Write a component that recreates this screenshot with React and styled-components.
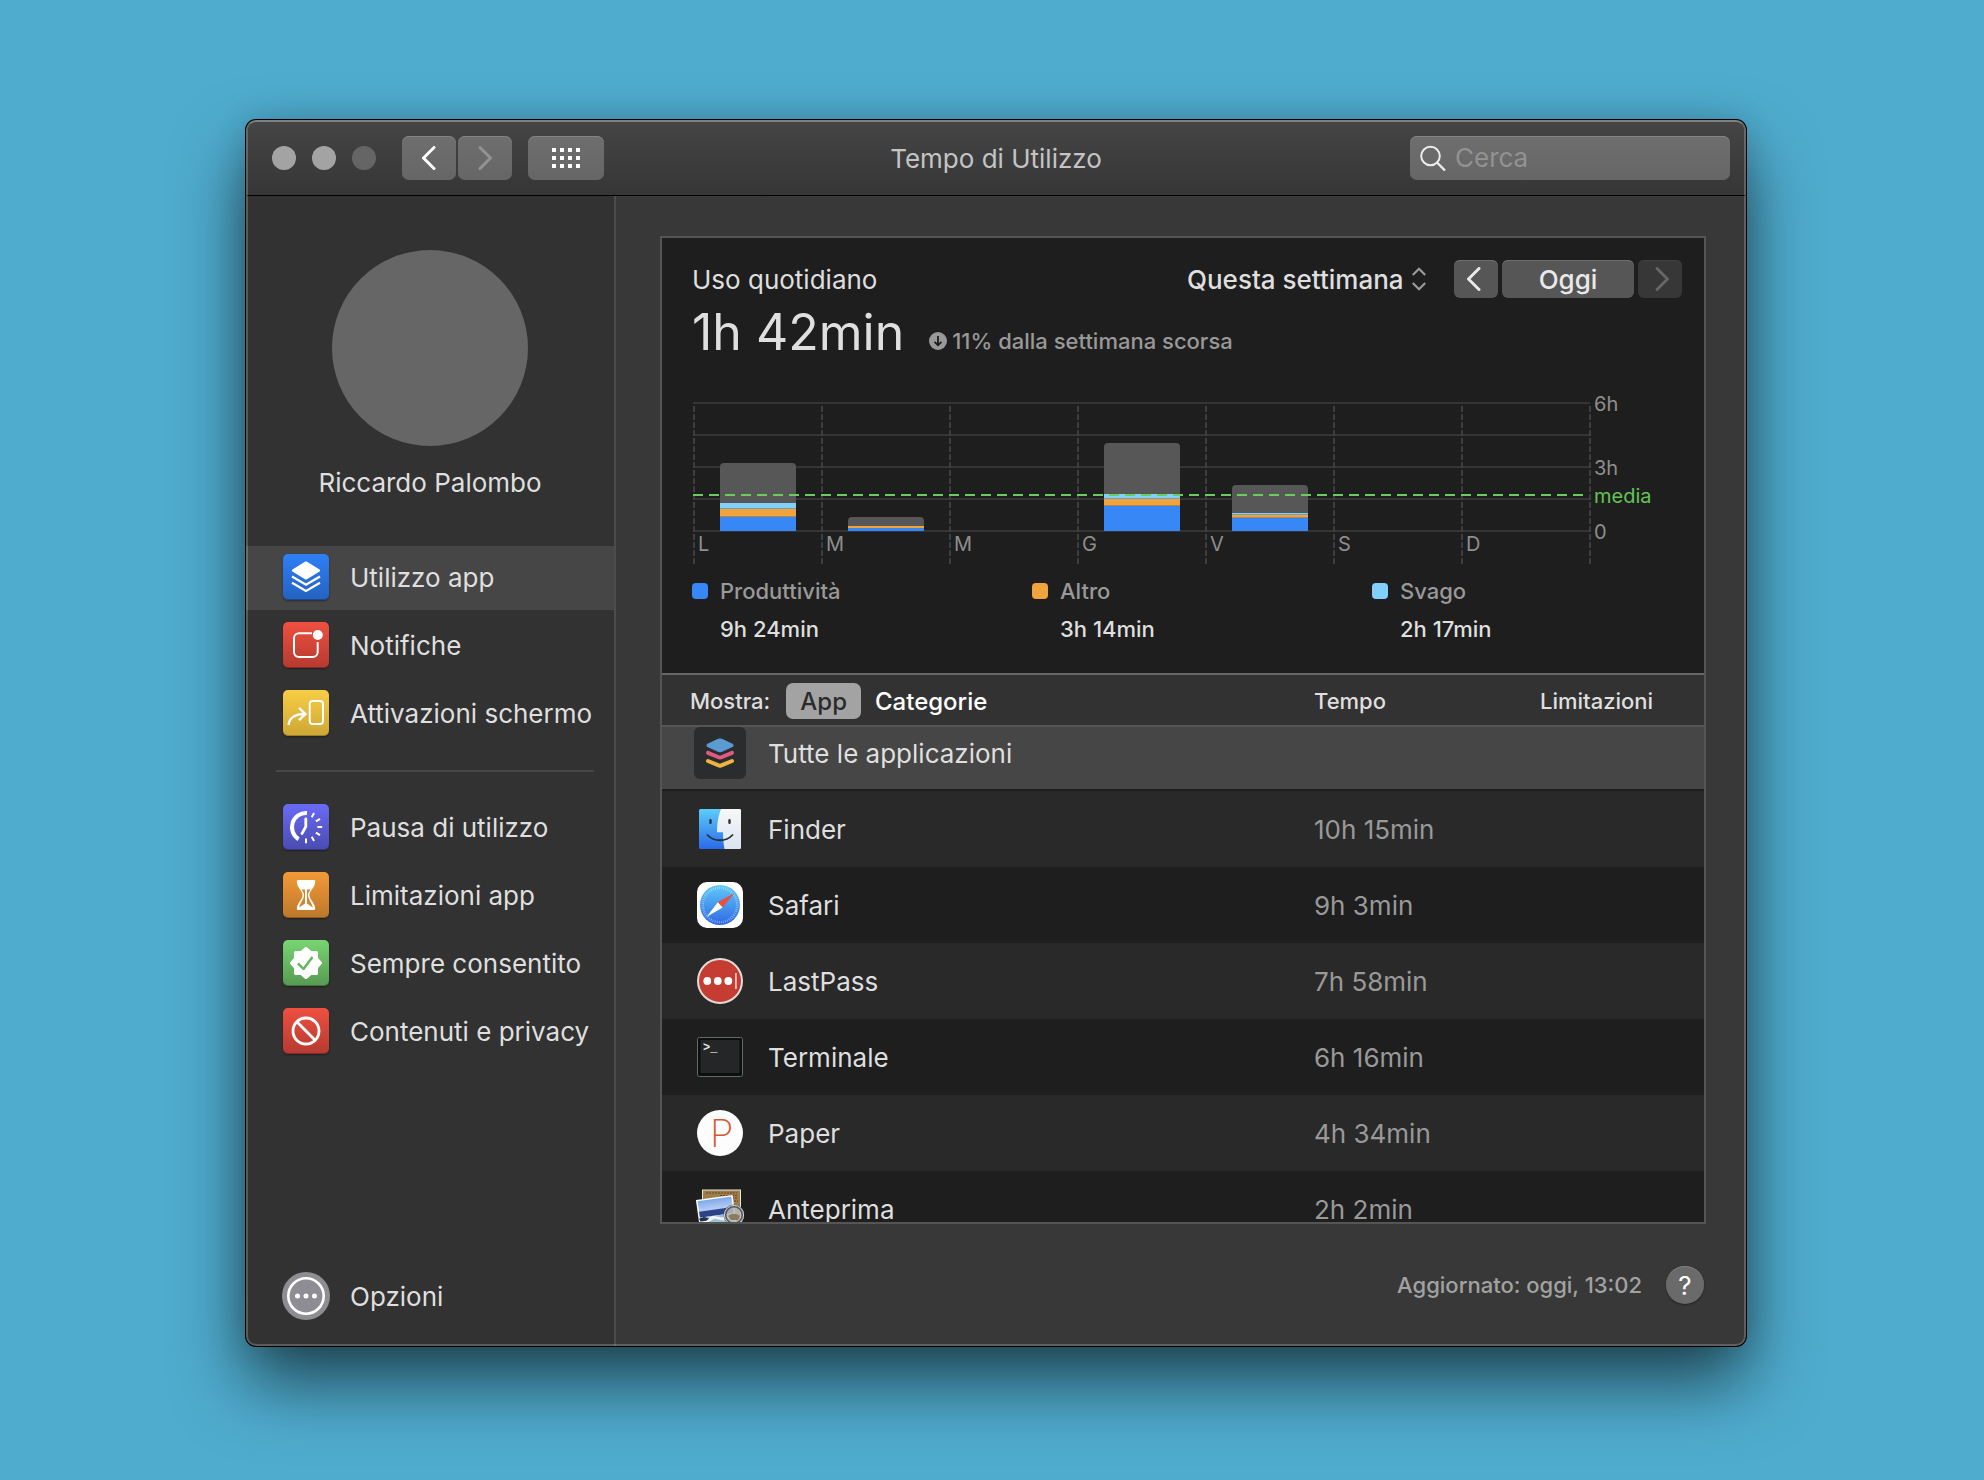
import React, { useState } from 'react'
import styled, { createGlobalStyle } from 'styled-components'

const GlobalStyle = createGlobalStyle`
  * {
    box-sizing: border-box;
  }
  body {
    margin: 0;
    background: #4facce;
    color: #dfdfdf;
    font-family: Inter, 'Liberation Sans', sans-serif;
    font-size: 26px;
  }
  button, input, select {
    font-family: inherit;
    font-size: inherit;
    color: inherit;
  }
`

/* ---------- data ---------- */

const mainItems = [
  { id: 'utilizzo', label: 'Utilizzo app', from: '#2f7ff8', to: '#2462c0', icon: <LayersIcon /> },
  { id: 'notifiche', label: 'Notifiche', from: '#ef5040', to: '#b53a30', icon: <NotificationIcon /> },
  { id: 'attivazioni', label: 'Attivazioni schermo', from: '#f8cd46', to: '#cda735', icon: <PickupIcon /> },
]

const limitItems = [
  { id: 'pausa', label: 'Pausa di utilizzo', from: '#6a6bf5', to: '#4a4bb0', icon: <DowntimeIcon /> },
  { id: 'limitazioni', label: 'Limitazioni app', from: '#f39a38', to: '#bd772b', icon: <HourglassIcon /> },
  { id: 'sempre', label: 'Sempre consentito', from: '#78d572', to: '#569a52', icon: <SealIcon /> },
  { id: 'contenuti', label: 'Contenuti e privacy', from: '#ef5040', to: '#b53a30', icon: <BanIcon /> },
]

const legend = [
  { label: 'Produttività', value: '9h 24min', color: '#3787f7' },
  { label: 'Altro', value: '3h 14min', color: '#f1a33c' },
  { label: 'Svago', value: '2h 17min', color: '#80d0fa' },
]

// heights in chart units, 128 units = 6 hours
const days = [
  { day: 'L', total: 68, work: 14, other: 8, fun: 6 },
  { day: 'M', total: 14, work: 3, other: 2, fun: 0 },
  { day: 'M', total: 0, work: 0, other: 0, fun: 0 },
  { day: 'G', total: 88, work: 25, other: 7, fun: 5 },
  { day: 'V', total: 46, work: 13, other: 3, fun: 2 },
  { day: 'S', total: 0, work: 0, other: 0, fun: 0 },
  { day: 'D', total: 0, work: 0, other: 0, fun: 0 },
]

const apps = [
  { name: 'Finder', time: '10h 15min', icon: <FinderIcon /> },
  { name: 'Safari', time: '9h 3min', icon: <SafariIcon /> },
  { name: 'LastPass', time: '7h 58min', icon: <LastPassIcon /> },
  { name: 'Terminale', time: '6h 16min', icon: <TerminalIcon /> },
  { name: 'Paper', time: '4h 34min', icon: <PaperIcon /> },
  { name: 'Anteprima', time: '2h 2min', icon: <PreviewIcon /> },
]

/* ---------- sidebar icons ---------- */

function LayersIcon() {
  return (
    <svg width="46" height="46" viewBox="0 0 46 46" fill="none" stroke="#fff" strokeWidth="2.2">
      <path d="M23 8.5L36 16.5 23 24.5 10 16.5Z" fill="#fff" strokeLinejoin="round" />
      <path d="M9 22.5L23 30.8 37 22.5" />
      <path d="M9 28.8L23 37 37 28.8" />
    </svg>
  )
}

function NotificationIcon() {
  return (
    <svg width="46" height="46" viewBox="0 0 46 46" fill="none" stroke="#fff" strokeWidth="2">
      <path d="M29 11.2H16a5 5 0 0 0-5 5V30a5 5 0 0 0 5 5h13.7a5 5 0 0 0 5-5V20" />
      <circle cx="34.8" cy="13" r="5" fill="#fff" stroke="none" />
    </svg>
  )
}

function PickupIcon() {
  return (
    <svg width="46" height="46" viewBox="0 0 46 46" fill="none" stroke="#fff" strokeWidth="2">
      <rect x="26.7" y="11" width="13.3" height="23" rx="3" />
      <path d="M5.7 35C6 28 12 24 22 24" strokeWidth="2.4" />
      <path d="M16 17.8L22.4 24 16 30.2" strokeWidth="2.4" />
    </svg>
  )
}

function DowntimeIcon() {
  const ticks = [30, 60, 90, 120, 150, 180]
  return (
    <svg width="46" height="46" viewBox="0 0 46 46" fill="none" stroke="#fff">
      <path d="M24 9A14.2 14.2 0 0 0 15.6 35.2" strokeWidth="4" />
      <path d="M22.8 15V22.6L19 29.5" strokeWidth="2.8" strokeLinecap="round" />
      {ticks.map(angle => (
        <path
          key={angle}
          d="M23 11.6V6.8"
          strokeWidth="2"
          transform={`rotate(${angle} 23 23)`}
        />
      ))}
    </svg>
  )
}

function HourglassIcon() {
  return (
    <svg width="46" height="46" viewBox="0 0 46 46" fill="none">
      <path
        d="M15 8H31a1.2 1.2 0 0 1 1.2 1.4C32 16 26.4 18.5 26.4 23S32 31 32.2 36.4a1.5 1.5 0 0 1-1.2 1.6H15a1.5 1.5 0 0 1-1.2-1.6C14 31 19.6 27.5 19.6 23S14 16 13.8 9.4A1.2 1.2 0 0 1 15 8Z"
        fill="#fff"
      />
      <path d="M18.5 17.5H22V31.5L16.2 35.5C17 30.5 21 28 21 23 21 20.5 19.5 19 18.5 17.5Z" fill="#d2842f" />
      <path d="M27.5 17.5H24V31.5L29.8 35.5C29 30.5 25 28 25 23 25 20.5 26.5 19 27.5 17.5Z" fill="#d2842f" />
    </svg>
  )
}

function SealIcon() {
  return (
    <svg width="46" height="46" viewBox="0 0 46 46" fill="none" strokeLinejoin="round">
      <path
        d="M23 8.5L27.6 12.5 33.5 12.5 33.5 18.5 37.5 23 33.5 27.5 33.5 33.5 27.6 33.5 23 37.5 18.4 33.5 12.5 33.5 12.5 27.5 8.5 23 12.5 18.5 12.5 12.5 18.4 12.5Z"
        fill="#fff"
        stroke="#fff"
        strokeWidth="3"
      />
      <path d="M15 23.3L20.5 29 29.5 17" stroke="#64b45f" strokeWidth="2.4" />
    </svg>
  )
}

function BanIcon() {
  return (
    <svg width="46" height="46" viewBox="0 0 46 46" fill="none" stroke="#fff" strokeWidth="2.8">
      <circle cx="23" cy="23" r="13" />
      <path d="M13.8 13.8L32.2 32.2" />
    </svg>
  )
}

function OptionsIcon() {
  return (
    <svg width="48" height="48" viewBox="0 0 48 48">
      <circle cx="24" cy="24" r="24" fill="#8e8d93" />
      <circle cx="24" cy="24" r="17.7" fill="none" stroke="#fff" strokeWidth="2.6" />
      <circle cx="15.5" cy="24" r="2.5" fill="#fff" />
      <circle cx="24" cy="24" r="2.5" fill="#fff" />
      <circle cx="32.5" cy="24" r="2.5" fill="#fff" />
    </svg>
  )
}

/* ---------- app icons ---------- */

function AllAppsIcon() {
  return (
    <svg width="52" height="52" viewBox="0 0 52 52">
      <rect width="52" height="52" rx="6" fill="#2a2c2e" />
      <path d="M13 17.5L24 12.3a5 5 0 0 1 4 0L39 17.5v1.8L28 24.3a5 5 0 0 1-4 0L13 19.3Z" fill="#5b9bd2" stroke="#5b9bd2" strokeLinejoin="round" />
      <path d="M14 25.8L24 30a5 5 0 0 0 4 0L38 25.8" fill="none" stroke="#dd5a82" strokeWidth="4" strokeLinecap="round" />
      <path d="M14 34L24 38.2a5 5 0 0 0 4 0L38 34" fill="none" stroke="#edb440" strokeWidth="4" strokeLinecap="round" />
    </svg>
  )
}

function FinderIcon() {
  return (
    <svg width="46" height="46" viewBox="0 0 46 46" fill="none">
      <defs>
        <linearGradient id="finderBlue" x1="0" y1="0" x2="0" y2="1">
          <stop offset="0" stopColor="#5ccdfa" />
          <stop offset="1" stopColor="#2a6ae9" />
        </linearGradient>
        <linearGradient id="finderWhite" x1="0" y1="0" x2="0" y2="1">
          <stop offset="0" stopColor="#f7f7f8" />
          <stop offset="1" stopColor="#dbe5f1" />
        </linearGradient>
      </defs>
      <rect x="2" y="3" width="42" height="40" rx="1.5" fill="url(#finderBlue)" />
      <path d="M24 3H42.5A1.5 1.5 0 0 1 44 4.5V41.5A1.5 1.5 0 0 1 42.5 43H27.5C26.5 38 26 32 26 26.3H20C20 18 21.5 9 24 3Z" fill="url(#finderWhite)" />
      <path d="M13.5 14.2v2.6M32.5 14.2v2.6" stroke="#26303d" strokeWidth="2.4" strokeLinecap="round" />
      <path d="M10.5 29C17 36 29 36 35.5 29" stroke="#26303d" strokeWidth="1.8" strokeLinecap="round" />
    </svg>
  )
}

function SafariIcon() {
  return (
    <svg width="46" height="46" viewBox="0 0 46 46">
      <defs>
        <linearGradient id="safariDial" x1="0" y1="0" x2="0" y2="1">
          <stop offset="0" stopColor="#5fcaf8" />
          <stop offset="1" stopColor="#2f68e5" />
        </linearGradient>
      </defs>
      <rect width="46" height="46" rx="10" fill="#fff" />
      <circle cx="23" cy="23" r="20" fill="url(#safariDial)" />
      <circle cx="23" cy="23" r="17.2" fill="none" stroke="#fff" strokeOpacity="0.5" strokeWidth="2.4" strokeDasharray="0.7 1.4" />
      <path d="M37.5 11L20.8 20.2 25.6 25.4Z" fill="#ea4e3d" />
      <path d="M9.5 35L20.8 20.2 25.6 25.4Z" fill="#fff" />
    </svg>
  )
}

function LastPassIcon() {
  return (
    <svg width="46" height="46" viewBox="0 0 46 46">
      <circle cx="23" cy="23" r="22" fill="#c43c32" stroke="#e0dcdb" strokeWidth="2" />
      <circle cx="10.3" cy="23" r="3.9" fill="#fff" />
      <circle cx="20.8" cy="23" r="3.9" fill="#fff" />
      <circle cx="31.3" cy="23" r="3.9" fill="#fff" />
      <rect x="38" y="15" width="1.8" height="16" fill="#efc1bd" />
    </svg>
  )
}

const PromptText = styled.text`
  font-family: 'Liberation Mono', monospace;
  font-size: 12px;
  font-weight: 700;
`

function TerminalIcon() {
  return (
    <svg width="46" height="46" viewBox="0 0 46 46">
      <rect x="0.5" y="3.5" width="45" height="39" rx="2" fill="#0d0e0e" stroke="#616b6b" />
      <rect x="3.5" y="6" width="39" height="33" fill="#252627" />
      <PromptText x="6" y="17" fill="#e6e6e6">&gt;_</PromptText>
    </svg>
  )
}

const PaperLetter = styled.text`
  font-size: 38px;
  font-weight: 200;
`

function PaperIcon() {
  return (
    <svg width="46" height="46" viewBox="0 0 46 46">
      <circle cx="23" cy="23" r="23" fill="#fdfdfd" />
      <PaperLetter x="13" y="37" fill="#d9572f">P</PaperLetter>
    </svg>
  )
}

function PreviewIcon() {
  return (
    <svg width="48" height="48" viewBox="0 -2 48 48">
      <defs>
        <linearGradient id="previewSky" x1="0" y1="0" x2="0" y2="1">
          <stop offset="0" stopColor="#7fa9ea" />
          <stop offset="1" stopColor="#cfdffa" />
        </linearGradient>
      </defs>
      <rect x="6.5" y="3" width="38" height="42" fill="#9d7d4c" stroke="#e9e4da" />
      <path d="M10 6h31M24 8.5h17M36 11h5M38 14h4" stroke="#5f4522" strokeDasharray="2 1" />
      <g transform="rotate(-8 23 30)">
        <rect x="2.5" y="10" width="37" height="38" fill="#fff" />
        <rect x="4" y="11.5" width="34" height="15" fill="url(#previewSky)" />
        <rect x="4" y="22" width="34" height="6" fill="#2b4389" />
        <rect x="4" y="28" width="34" height="20" fill="#9fc0d3" />
        <path d="M4 29l7 1 6-2 9 3 11-2v3l-10 2-9-3-7 3-7-2Z" fill="#eef4f7" />
        <path d="M3 29l5-1 5 2-3 2H4Z" fill="#233047" />
      </g>
      <circle cx="38" cy="28" r="9" fill="#b9bcb8" fillOpacity="0.85" stroke="#565c60" strokeWidth="3" />
      <circle cx="38" cy="28" r="9.6" fill="none" stroke="#cdd2d5" />
      <path d="M32 29c4-3 8-3 12 0l-2 4h-7Z" fill="#8c7a5e" />
      <path d="M44 35l5 7" stroke="#c9cdd0" strokeWidth="4" />
    </svg>
  )
}

/* ---------- small glyphs ---------- */

const Chevron = ({ flip }) => (
  <svg width="14" height="24" viewBox="0 0 14 24" fill="none" stroke="currentColor" strokeWidth="3" strokeLinecap="round" strokeLinejoin="round">
    <path d={flip ? 'M2 1.5L12.5 12 2 22.5' : 'M12 1.5L1.500 12 12 22.5'} />
  </svg>
)

const GridGlyph = () => (
  <svg width="28" height="20" viewBox="0 0 28 20" fill="#fff">
    {[0, 8, 16].map(y => [0, 8, 16, 24].map(x => (
      <rect key={`${x}-${y}`} x={x} y={y} width="4" height="4" />
    )))}
  </svg>
)

const SearchGlyph = () => (
  <svg width="26" height="26" viewBox="0 0 26 26" fill="none" stroke="#ececec" strokeWidth="2">
    <circle cx="10.5" cy="11" r="9.3" />
    <path d="M17 17.5L25 25.5" strokeWidth="2.4" />
  </svg>
)

const UpDownGlyph = () => (
  <svg width="14" height="24" viewBox="0 0 14 24" fill="none" stroke="#9a9a9a" strokeWidth="2.2">
    <path d="M0.8 8L7 1.8 13.2 8" />
    <path d="M0.8 16L7 22.2 13.2 16" />
  </svg>
)

const TrendDown = () => (
  <svg width="18" height="18" viewBox="0 0 18 18">
    <circle cx="9" cy="9" r="9" fill="#999" />
    <path d="M9 4V13M5.5 9.8L9 13.2 12.5 9.8" fill="none" stroke="#1e1e1e" strokeWidth="1.8" />
  </svg>
)

/* ---------- chart ---------- */

const UsageChart = () => (
  <ChartSvg viewBox="0 0 990 166" role="img" aria-label="Uso quotidiano della settimana">
    {[2, 34, 66, 98, 130].map(y => (
      <rect key={y} x="1" y={y} width="897" height="2" fill="#343434" />
    ))}
    {[0, 1, 2, 3, 4, 5, 6, 7].map(i => (
      <path key={i} d={`M${2 + i * 128} 6V164`} stroke="#3e3e3e" strokeWidth="2" strokeDasharray="6 2" />
    ))}
    {days.map((d, i) => <Bar key={i} x={28 + i * 128} {...d} />)}
    <path d="M1 95H892" stroke="#66cf5c" strokeWidth="2" strokeDasharray="10 6" />
    {days.map((d, i) => (
      <AxisText key={i} x={6 + i * 128} y="151">{d.day}</AxisText>
    ))}
    <AxisText x="902" y="11">6h</AxisText>
    <AxisText x="902" y="75">3h</AxisText>
    <AxisText x="902" y="103" $accent>media</AxisText>
    <AxisText x="902" y="139">0</AxisText>
  </ChartSvg>
)

const Bar = ({ x, total, work, other, fun }) => {
  if (!total) return null
  const base = 131
  const top = base - total
  return (
    <g>
      <path d={`M${x} ${base}V${top + 4}q0 -4 4 -4H${x + 72}q4 0 4 4V${base}Z`} fill="#575757" />
      <rect x={x} y={base - work - other - fun} width="76" height={fun} fill="#80d0fa" />
      <rect x={x} y={base - work - other} width="76" height={other} fill="#f1a33c" />
      <rect x={x} y={base - work} width="76" height={work} fill="#3787f7" />
      {total > 20 && (
        <g fill="#555" fillOpacity="0.4">
          <rect x={x} y={base - work - 1} width="76" height="1" />
          <rect x={x} y={base - work - other - 1} width="76" height="1" />
        </g>
      )}
    </g>
  )
}

/* ---------- page ---------- */

const App = () => {
  const [section, setSection] = useState('utilizzo')
  const [view, setView] = useState('app')

  const renderItem = item => (
    <NavItem
      key={item.id}
      href={`#${item.id}`}
      $active={section === item.id}
      onClick={() => setSection(item.id)}
    >
      <Tile $from={item.from} $to={item.to}>{item.icon}</Tile>
      {item.label}
    </NavItem>
  )

  return (
    <Desktop>
      <GlobalStyle />
      <Window>
        <Toolbar>
          <ToolbarSide>
            <Lights>
              <Light aria-label="Chiudi" />
              <Light aria-label="Riduci" />
              <Light aria-label="Ingrandisci" $dim />
            </Lights>
            <NavButtons>
              <ToolButton aria-label="Indietro"><Chevron /></ToolButton>
              <ToolButton aria-label="Avanti" $dim><Chevron flip /></ToolButton>
            </NavButtons>
            <ToolButton aria-label="Mostra tutte" $wide><GridGlyph /></ToolButton>
          </ToolbarSide>
          <WindowTitle>Tempo di Utilizzo</WindowTitle>
          <ToolbarSide $end>
            <Search>
              <SearchGlyph />
              <SearchInput type="text" placeholder="Cerca" aria-label="Cerca" />
            </Search>
          </ToolbarSide>
        </Toolbar>

        <Body>
          <Sidebar>
            <Avatar />
            <UserName>Riccardo Palombo</UserName>
            <Nav>{mainItems.map(renderItem)}</Nav>
            <Divider />
            <Nav>{limitItems.map(renderItem)}</Nav>
            <Options href="#opzioni">
              <OptionsIcon />
              Opzioni
            </Options>
          </Sidebar>

          <Main>
            <Panel>
              <Summary>
                <SummaryHead>
                  <SummaryTitle>Uso quotidiano</SummaryTitle>
                  <Period>
                    <PeriodSelect aria-label="Periodo">
                      <option>Questa settimana</option>
                    </PeriodSelect>
                    <UpDownGlyph />
                  </Period>
                  <DayButtons>
                    <DayButton aria-label="Giorno precedente" $side="left"><Chevron /></DayButton>
                    <DayButton>Oggi</DayButton>
                    <DayButton aria-label="Giorno successivo" $side="right" disabled><Chevron flip /></DayButton>
                  </DayButtons>
                </SummaryHead>
                <Total>
                  <TotalValue>1h 42min</TotalValue>
                  <Trend><TrendDown />11% dalla settimana scorsa</Trend>
                </Total>
                <UsageChart />
                <Legend>
                  {legend.map(item => (
                    <LegendItem key={item.label}>
                      <Swatch $color={item.color} />
                      <LegendLabel>{item.label}</LegendLabel>
                      <LegendValue>{item.value}</LegendValue>
                    </LegendItem>
                  ))}
                </Legend>
              </Summary>

              <TableWrap>
                <Table>
                  <thead>
                    <tr>
                      <HeadCell $first>
                        <Filter>
                          Mostra:
                          <FilterButton $active={view === 'app'} onClick={() => setView('app')}>App</FilterButton>
                          <FilterButton $active={view === 'categorie'} onClick={() => setView('categorie')}>Categorie</FilterButton>
                        </Filter>
                      </HeadCell>
                      <HeadCell $time>Tempo</HeadCell>
                      <HeadCell>Limitazioni</HeadCell>
                    </tr>
                  </thead>
                  <tbody>
                    <AllRow>
                      <td>
                        <AppName>
                          <IconSlot><AllAppsIcon /></IconSlot>
                          Tutte le applicazioni
                        </AppName>
                      </td>
                      <td />
                      <td />
                    </AllRow>
                    {apps.map(app => (
                      <Row key={app.name}>
                        <td>
                          <AppName>
                            <IconSlot>{app.icon}</IconSlot>
                            {app.name}
                          </AppName>
                        </td>
                        <TimeCell>{app.time}</TimeCell>
                        <td />
                      </Row>
                    ))}
                  </tbody>
                </Table>
              </TableWrap>
            </Panel>

            <Footer>
              Aggiornato: oggi, 13:02
              <HelpButton aria-label="Aiuto">?</HelpButton>
            </Footer>
          </Main>
        </Body>
      </Window>
    </Desktop>
  )
}

export default App

const Desktop = styled.div`
  height: 100vh;
  min-height: 1300px;
  padding: 120px 238px 134px 246px;
  background: #4facce;
`

const Window = styled.div`
  display: flex;
  flex-direction: column;
  height: 100%;
  border-radius: 10px;
  overflow: hidden;
  position: relative;
  background: #383838;
  box-shadow: 0 0 0 1px #000, 0 36px 70px rgba(0, 0, 0, 0.6), 0 0 30px rgba(0, 0, 0, 0.15);

  /* light rim drawn over the bars */
  &::after {
    content: '';
    position: absolute;
    inset: 0;
    border: 2px solid rgba(255, 255, 255, 0.2);
    border-top-color: rgba(255, 255, 255, 0.32);
    border-radius: 10px;
    pointer-events: none;
  }
`

const Toolbar = styled.header`
  display: grid;
  grid-template-columns: 1fr auto 1fr;
  align-items: center;
  flex-shrink: 0;
  height: 76px;
  padding: 0 16px 0 26px;
  background: linear-gradient(#454545, #363636);
  border-bottom: 1px solid #000;
`

const ToolbarSide = styled.div`
  display: flex;
  align-items: center;
  gap: 16px;
  justify-content: ${props => (props.$end ? 'flex-end' : 'flex-start')};
`

const Lights = styled.div`
  display: flex;
  gap: 16px;
  margin-right: 10px;
`

const Light = styled.button`
  width: 24px;
  height: 24px;
  padding: 0;
  border: 0;
  border-radius: 50%;
  background: ${props => (props.$dim ? '#656565' : '#a3a3a3')};
`

const NavButtons = styled.div`
  display: flex;
  gap: 2px;
`

const ToolButton = styled.button`
  display: flex;
  align-items: center;
  justify-content: center;
  width: ${props => (props.$wide ? '76px' : '54px')};
  height: 44px;
  padding: 0;
  border: 0;
  border-radius: 7px;
  color: ${props => (props.$dim ? '#939393' : '#fff')};
  background: linear-gradient(#6e6e6e, #666);
  box-shadow: inset 0 1px 0 #838383;
`

const WindowTitle = styled.h1`
  margin: 0 0 0 -10px;
  padding-top: 2px;
  font-size: 26px;
  font-weight: 400;
  line-height: 32px;
  color: #c4c4c4;
`

const Search = styled.label`
  display: flex;
  align-items: center;
  gap: 9px;
  width: 320px;
  height: 44px;
  padding: 0 10px;
  border-radius: 7px;
  background: linear-gradient(#6e6e6e, #666);
  box-shadow: inset 0 1px 0 #838383;
`

const SearchInput = styled.input`
  flex: 1;
  min-width: 0;
  padding: 0;
  border: 0;
  outline: 0;
  background: none;

  &::placeholder {
    color: #929292;
    opacity: 1;
  }
`

const Body = styled.div`
  display: flex;
  flex: 1;
  min-height: 0;
`

const Sidebar = styled.aside`
  display: flex;
  flex-direction: column;
  flex-shrink: 0;
  width: 370px;
  padding-top: 54px;
  background: #323232;
  border-right: 2px solid #4c4c4c;
`

const Avatar = styled.div`
  width: 196px;
  height: 196px;
  margin: 0 auto;
  border-radius: 50%;
  background: #666;
`

const UserName = styled.div`
  margin: 21px 0 47px;
  line-height: 32px;
  text-align: center;
`

const Nav = styled.nav`
  display: flex;
  flex-direction: column;
  gap: 4px;
`

const NavItem = styled.a`
  display: flex;
  align-items: center;
  gap: 21px;
  height: 64px;
  padding: 0 0 2px 37px;
  color: inherit;
  text-decoration: none;
  white-space: nowrap;
  background: ${props => (props.$active ? '#464646' : 'transparent')};
`

const Tile = styled.span`
  display: flex;
  width: 46px;
  height: 46px;
  border-radius: 5px;
  background: linear-gradient(${props => props.$from}, ${props => props.$to});
  box-shadow: inset 0 -1px 0 rgba(0, 0, 0, 0.25), 0 1px 2px rgba(0, 0, 0, 0.4);
`

const Divider = styled.div`
  height: 2px;
  margin: 24px 20px 24px 30px;
  background: #474747;
`

const Options = styled.a`
  display: flex;
  align-items: center;
  gap: 20px;
  margin-top: auto;
  padding: 0 0 26px 36px;
  color: inherit;
  text-decoration: none;
`

const Main = styled.main`
  display: flex;
  flex-direction: column;
  flex: 1;
  min-width: 0;
  padding: 40px 40px 0 44px;
`

const Panel = styled.section`
  display: flex;
  flex-direction: column;
  flex: 1;
  min-height: 0;
  border: 2px solid #555;
  background: #1e1e1e;
`

const Summary = styled.div`
  flex-shrink: 0;
  padding: 22px 22px 29px 30px;
`

const SummaryHead = styled.div`
  display: flex;
  align-items: center;
  height: 38px;
`

const SummaryTitle = styled.h2`
  flex: 1;
  margin: 0;
  font-size: 26px;
  font-weight: 400;
`

const Period = styled.div`
  display: flex;
  align-items: center;
  gap: 8px;
  margin-right: 28px;
`

const PeriodSelect = styled.select`
  appearance: none;
  padding: 0;
  border: 0;
  background: none;
  font-weight: 500;
`

const DayButtons = styled.div`
  display: flex;
  gap: 4px;
`

const DayButton = styled.button`
  display: flex;
  align-items: center;
  justify-content: center;
  width: ${props => (props.$side ? '44px' : '132px')};
  height: 38px;
  padding: 0;
  padding-right: ${props => (props.$side === 'left' ? '4px' : 0)};
  padding-left: ${props => (props.$side === 'right' ? '4px' : 0)};
  border: 0;
  border-radius: 6px;
  font-weight: 500;
  color: #e9e9e9;
  background: #565656;
  box-shadow: inset 0 1px 0 #6d6d6d;

  &:disabled {
    color: #666;
    background: #373737;
    box-shadow: inset 0 1px 0 #424242;
  }
`

const Total = styled.div`
  display: flex;
  align-items: baseline;
  gap: 25px;
  height: 60px;
  margin-top: 4px;
`

const TotalValue = styled.div`
  font-size: 50px;
  line-height: 60px;
`

const Trend = styled.div`
  display: flex;
  align-items: center;
  gap: 5px;
  font-size: 22px;
  font-weight: 500;
  color: #999;
`

const ChartSvg = styled.svg`
  display: block;
  width: 100%;
  height: auto;
  margin-top: 38px;
  overflow: visible;
`

const AxisText = styled.text`
  font-size: 20px;
  fill: ${props => (props.$accent ? '#62c554' : '#8e8e8e')};
`

const Legend = styled.div`
  display: grid;
  grid-template-columns: 340px 340px 1fr;
  margin-top: 10px;
  font-size: 22px;
  font-weight: 500;
  line-height: 30px;
`

const LegendItem = styled.div`
  display: grid;
  grid-template-columns: 16px 1fr;
  align-items: center;
  gap: 8px 12px;
`

const Swatch = styled.span`
  width: 16px;
  height: 16px;
  border-radius: 4px;
  background: ${props => props.$color};
`

const LegendLabel = styled.span`
  color: #999;
`

const LegendValue = styled.span`
  grid-column: 2;
`

const TableWrap = styled.div`
  flex: 1;
  min-height: 0;
  overflow-y: auto;
  scrollbar-width: none;
  border-top: 2px solid #666;
`

const Table = styled.table`
  width: 100%;
  table-layout: fixed;
  border-collapse: separate;
  border-spacing: 0;

  td {
    padding: 0;
  }
`

const HeadCell = styled.th`
  position: sticky;
  top: 0;
  width: ${props => (props.$first ? '652px' : props.$time ? '226px' : 'auto')};
  height: 52px;
  padding: 2px 0 0;
  font-size: 22px;
  font-weight: 500;
  text-align: left;
  background: #323232;
  border-bottom: 2px solid #555;
`

const Filter = styled.div`
  display: flex;
  align-items: center;
  padding-left: 28px;
`

const FilterButton = styled.button`
  height: 36px;
  padding: 0 14px;
  border: 0;
  border-radius: 7px;
  font-size: 24px;
  font-weight: 500;
  color: ${props => (props.$active ? '#2b2b2b' : '#fff')};
  background: ${props => (props.$active ? '#a3a3a3' : 'transparent')};

  &:first-of-type {
    margin-left: 16px;
  }
`

const Row = styled.tr`
  height: 76px;
  background: #1e1e1e;

  &:nth-child(even) {
    background: #292929;
  }
`

const AllRow = styled.tr`
  height: 64px;
  background: #464646;

  td {
    vertical-align: top;
    border-bottom: 2px solid #1e1e1e;
  }
`

const AppName = styled.div`
  display: flex;
  align-items: center;
  gap: 22px;
  padding-left: 32px;
`

const IconSlot = styled.span`
  display: flex;
  justify-content: center;
  width: 52px;
`

const TimeCell = styled.td`
  color: #999;
`

const Footer = styled.footer`
  display: flex;
  align-items: center;
  justify-content: flex-end;
  flex-shrink: 0;
  gap: 24px;
  height: 122px;
  padding-right: 2px;
  font-size: 22px;
  font-weight: 500;
  color: #a2a2a2;
`

const HelpButton = styled.button`
  width: 38px;
  height: 38px;
  padding: 0;
  border: 0;
  border-radius: 50%;
  font-size: 26px;
  color: #fff;
  background: #6a6a6a;
  box-shadow: inset 0 1px 0 #7f7f7f, 0 1px 2px rgba(0, 0, 0, 0.4);
`
